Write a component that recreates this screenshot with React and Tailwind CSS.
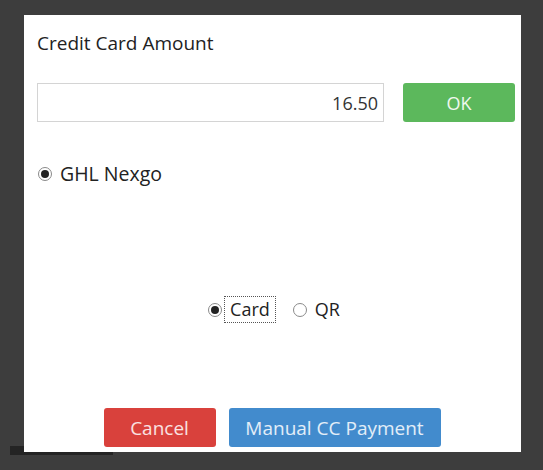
import React from "react";

const font = { fontFamily: '"Open Sans", "Noto Sans", sans-serif' };

function Radio({ checked }) {
  return (
    <span className="flex h-[14px] w-[14px] items-center justify-center rounded-full border border-[#8a8a8a] bg-white">
      {checked && <span className="h-[8px] w-[8px] rounded-full bg-[#222]" />}
    </span>
  );
}

export default function App() {
  return (
    <div className="relative h-[470px] w-[543px] overflow-hidden bg-[#3d3d3d] pl-[24px] pt-[15px]" style={font}>
      {/* strip under the dialog */}
      <div className="absolute left-[10px] top-[446px] h-[9px] w-[103px] bg-[#242424]" />

      <div className="relative flex h-[437px] w-[497px] flex-col bg-white pl-[13px] pr-[6px]">
        <div className="mt-[15px] h-[26px] text-[19px] leading-[26px] text-[#222]">Credit Card Amount</div>

        <div className="mt-[27px] flex items-center gap-[19px]">
          <div className="flex h-[39px] w-[347px] items-center justify-end border border-[#d4d4d4] pr-[5px] pt-[2px] text-[18px] text-[#333]">
            16.50
          </div>
          <button className="h-[39px] w-[112px] rounded-[3px] bg-[#5cb85c] pt-[2px] text-[18px] text-white/90">OK</button>
        </div>

        <div className="mt-[39px] flex items-center gap-[8px] pl-[1px]">
          <Radio checked />
          <span className="text-[19.5px] leading-[26px] text-[#222]">GHL Nexgo</span>
        </div>

        <div className="mt-[109px] flex items-center justify-center pr-[4px]">
          <div className="flex items-center">
            <Radio checked />
            <span className="ml-[2px] border border-dotted border-[#555] px-[5px] text-[18px] leading-[25px] text-[#222]">Card</span>
          </div>
          <div className="ml-[17px] flex items-center gap-[8px]">
            <Radio />
            <span className="text-[18px] leading-[25px] text-[#222]">QR</span>
          </div>
        </div>

        <div className="mt-[85px] flex justify-center gap-[13px] pr-[8px]">
          <button className="h-[39px] w-[112px] rounded-[3px] bg-[#d9413c] pt-[2px] text-[19px] text-white/85">Cancel</button>
          <button className="h-[39px] w-[212px] rounded-[3px] bg-[#428bcd] pt-[2px] text-[19px] text-white/85">Manual CC Payment</button>
        </div>
      </div>
    </div>
  );
}
